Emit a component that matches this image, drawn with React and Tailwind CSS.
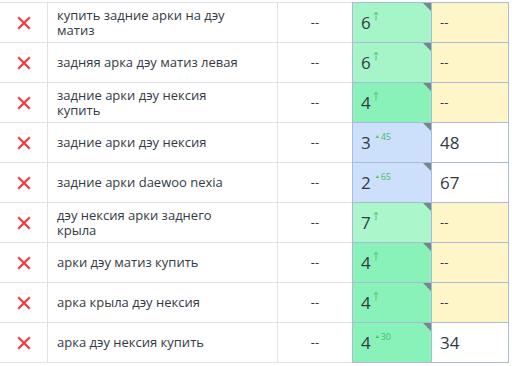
import React from "react";

const rows = [
  { kw: "купить задние арки на дэу матиз", pos: 6, bg: "bg-[#a5f5c9]", delta: null, val: null },
  { kw: "задняя арка дэу матиз левая", pos: 6, bg: "bg-[#a5f5c9]", delta: null, val: null },
  { kw: "задние арки дэу нексия купить", pos: 4, bg: "bg-[#89f2b9]", delta: null, val: null },
  { kw: "задние арки дэу нексия", pos: 3, bg: "bg-[#cde0fb]", delta: 45, val: 48 },
  { kw: "задние арки daewoo nexia", pos: 2, bg: "bg-[#cde0fb]", delta: 65, val: 67 },
  { kw: "дэу нексия арки заднего крыла", pos: 7, bg: "bg-[#abf7cb]", delta: null, val: null },
  { kw: "арки дэу матиз купить", pos: 4, bg: "bg-[#89f2b9]", delta: null, val: null },
  { kw: "арка крыла дэу нексия", pos: 4, bg: "bg-[#89f2b9]", delta: null, val: null },
  { kw: "арка дэу нексия купить", pos: 4, bg: "bg-[#89f2b9]", delta: 30, val: 34 },
];

function RemoveIcon() {
  return (
    <svg width="14" height="14" viewBox="0 0 14 14">
      <path d="M2 2 L12 12 M12 2 L2 12" stroke="#f23d3d" strokeWidth="2.2" strokeLinecap="square" />
    </svg>
  );
}

function UpArrow() {
  return (
    <svg width="6" height="10" viewBox="0 0 6 10" className="self-start mt-[8px] ml-[2px]">
      <path d="M3 9.5 V1.5 M1 3.5 L3 1 L5 3.5" stroke="#55c470" strokeWidth="1" fill="none" />
    </svg>
  );
}

function Row({ r, first }) {
  const gray = "border-[#e1e2e8]";
  const blue = "border-[#a9bbd9]";
  return (
    <div className="flex">
      <div className={`w-[48px] h-[40px] flex items-center justify-center border-r border-b ${gray} ${first ? "border-t h-[41px]" : ""}`}>
        <RemoveIcon />
      </div>
      <div className={`w-[230px] h-[40px] flex items-center pl-[9px] border-r border-b ${gray} ${first ? "border-t h-[41px]" : ""}`}>
        <span className="max-w-[188px] text-[13px] leading-[15px] text-[#333a44]">{r.kw}</span>
      </div>
      <div className={`w-[74px] h-[40px] flex items-center justify-center border-b ${gray} ${first ? "border-t h-[41px]" : ""}`}>
        <span className="text-[13px] text-[#333a44]">--</span>
      </div>
      <div className={`relative w-[79px] h-[40px] flex items-center pl-[8px] border-l border-b ${blue} ${r.bg} ${first ? "border-t h-[41px]" : ""}`}>
        <span className="text-[17px] text-[#333a44] leading-none">{r.pos}</span>
        {r.delta ? (
          <span className="self-start mt-[9px] ml-[4px] flex items-center text-[#3ec15e] leading-none">
            <span className="text-[5px] mr-[1px]">▲</span>
            <span className="text-[9px]">{r.delta}</span>
          </span>
        ) : (
          <UpArrow />
        )}
        <span className="absolute top-0 right-0 w-0 h-0 border-t-[8px] border-l-[8px] border-l-transparent border-t-[#6f8a88]" />
      </div>
      <div className={`w-[78px] h-[40px] flex items-center pl-[8px] border-l border-r border-b ${blue} ${r.val ? "bg-white" : "bg-[#fef5c8]"} ${first ? "border-t h-[41px]" : ""}`}>
        {r.val ? (
          <span className="text-[17px] text-[#333a44]">{r.val}</span>
        ) : (
          <span className="text-[13px] text-[#333a44]">--</span>
        )}
      </div>
    </div>
  );
}

export default function App() {
  return (
    <div className="w-[512px] h-[366px] bg-white pt-[2px] overflow-hidden" style={{ fontFamily: '"Open Sans", sans-serif' }}>
      {rows.map((r, i) => (
        <Row key={i} r={r} first={i === 0} />
      ))}
    </div>
  );
}
